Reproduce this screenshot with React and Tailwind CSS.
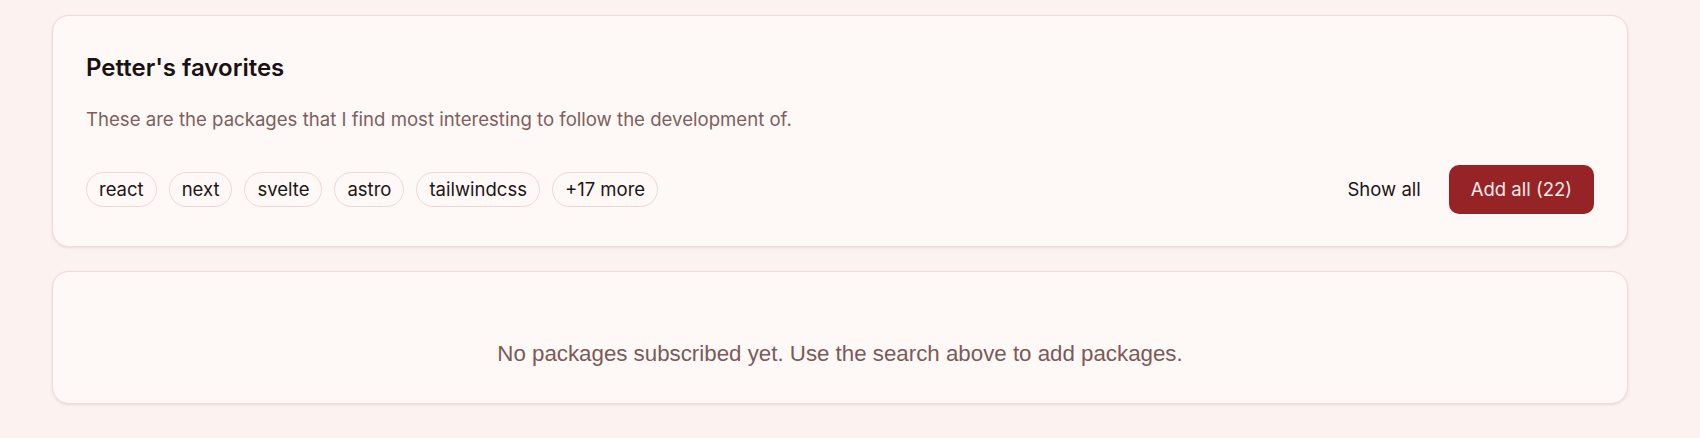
const favorites = ['react', 'next', 'svelte', 'astro', 'tailwindcss']

function Tag({ children }) {
  return (
    <span className="rounded-full border border-[#ecd9d5] px-3 py-1 text-[18.5px] leading-[25px] text-[#1d1515]">
      {children}
    </span>
  )
}

export default function App() {
  return (
    <div
      className="flex min-h-screen flex-col gap-6 bg-[#fcf3f1] pl-[52px] pr-[72px] pt-[15px]"
      style={{ fontFamily: 'Inter, "Noto Sans", sans-serif' }}
    >
      <section className="rounded-[17px] border border-[#f0dcd8] bg-[#fef8f7] px-[33px] pb-8 pt-[37px] shadow-[0_1px_3px_rgba(130,60,50,0.14)]">
        <h2 className="text-[24px] font-semibold leading-[30px] text-[#1a1212]">Petter's favorites</h2>
        <p className="mt-[22px] text-[18.6px] leading-[28px] text-[#7e605d]">
          These are the packages that I find most interesting to follow the development of.
        </p>
        <div className="mt-[32px] flex items-center justify-between">
          <div className="flex items-center gap-3">
            {favorites.map((name) => (
              <Tag key={name}>{name}</Tag>
            ))}
            <Tag>+17 more</Tag>
          </div>
          <div className="flex items-center gap-3">
            <button type="button" className="px-4 py-3 text-[18.5px] leading-[25px] text-[#1d1515]">
              Show all
            </button>
            <button
              type="button"
              className="rounded-[10px] bg-[#962427] px-[22px] py-3 text-[18.5px] leading-[25px] text-[#fbe9e7]"
            >
              Add all (22)
            </button>
          </div>
        </div>
      </section>

      <section className="rounded-[17px] border border-[#f0dcd8] bg-[#fef8f7] pb-[34px] pt-[67px] text-center shadow-[0_1px_3px_rgba(130,60,50,0.14)]">
        <p
          className="text-[22.3px] leading-[30px] text-[#7a5b58]"
          style={{ fontFamily: '"Liberation Sans", Arial, sans-serif' }}
        >
          No packages subscribed yet. Use the search above to add packages.
        </p>
      </section>
    </div>
  )
}
